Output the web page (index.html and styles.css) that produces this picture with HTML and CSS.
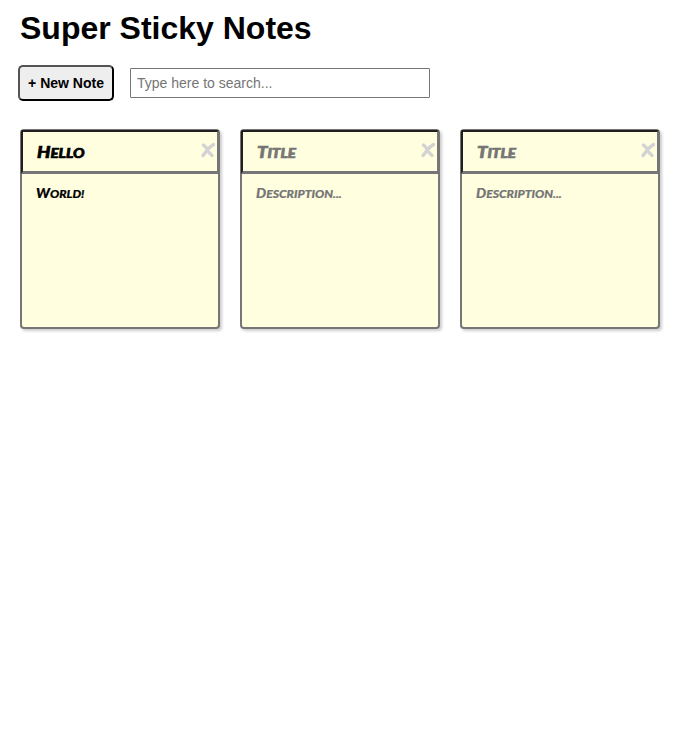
FILE: index.html
```html
<!DOCTYPE html>
<html lang="en">
<head>
<meta charset="utf-8">
<title>Super Sticky Notes</title>
<link rel="stylesheet" href="styles.css">
</head>
<body>
<header>
  <h1 class="app-title">Super Sticky Notes</h1>
  <div class="controls">
    <button class="add-new">+ New Note</button>
    <input class="search" type="text" placeholder="Type here to search...">
  </div>
</header>
<ul class="notes-list">
  <li class="note">
    <div class="note-title"><span class="hand">Hello</span></div>
    <div class="note-body"><span class="hand">World!</span></div>
    <svg class="close" viewBox="0 0 16 16"><path d="M3.500 3Q6.500 5.500 8 8.500T12 13.500M13.500 2.500Q10 4.500 7 8.500T3 13.500"/></svg>
  </li>
  <li class="note empty">
    <div class="note-title"><span class="hand">Title</span></div>
    <div class="note-body"><span class="hand">Description...</span></div>
    <svg class="close" viewBox="0 0 16 16"><path d="M3.500 3Q6.500 5.500 8 8.500T12 13.500M13.500 2.500Q10 4.500 7 8.500T3 13.500"/></svg>
  </li>
  <li class="note empty">
    <div class="note-title"><span class="hand">Title</span></div>
    <div class="note-body"><span class="hand">Description...</span></div>
    <svg class="close" viewBox="0 0 16 16"><path d="M3.500 3Q6.500 5.500 8 8.500T12 13.500M13.500 2.500Q10 4.500 7 8.500T3 13.500"/></svg>
  </li>
</ul>
</body>
</html>
```
FILE: styles.css
```css
* { box-sizing: border-box; }
body { margin: 0; background: #fff; font-family: "Liberation Sans", Arial, sans-serif; color: #000; }
header { padding: 10px 18px 0; }
.app-title { margin: 0 0 0 2px; font-size: 32px; line-height: 37px; }
.controls { display: flex; align-items: center; gap: 16px; margin-top: 18px; }
.add-new { width: 96px; height: 36px; padding: 0; border: 2px outset #000; border-radius: 5px; background: #eee; color: #000; font: bold 14px "Liberation Sans", Arial, sans-serif; white-space: nowrap; }
.search { width: 300px; height: 30px; padding: 1px 6px; border: 1px solid #767676; border-radius: 1px; font: 14px "Liberation Sans", Arial, sans-serif; }
.search::placeholder { color: #757575; }
.notes-list { display: flex; gap: 20px; margin: 28px 0 0; padding: 0 20px 8px; list-style: none; }
.note { position: relative; flex: none; width: 200px; height: 200px; border: 2px solid #767676; border-top-width: 1px; border-radius: 4px; background: #ffffe0; box-shadow: 2px 2px 3px rgba(0,0,0,.2); }
.note-title { height: 44px; margin: 0 -1px; padding: 10px 0 0 14px; border: 2px solid; border-color: #1f1f1f #767676 #767676 #1f1f1f; border-bottom-width: 3px; border-radius: 2px 2px 0 0; }
.note-body { padding: 10px 0 0 14px; }
.hand { display: block; width: max-content; font-family: Lato, "Open Sans", sans-serif; text-transform: uppercase; font-weight: 900; font-style: italic; transform-origin: left center; }
.note-title .hand { font-size: 13.5px; line-height: 21px; -webkit-text-stroke: .7px currentColor; transform: scaleX(1.13); }
.note-title .hand::first-letter { font-size: 16.5px; }
.note-body .hand { font-size: 11.5px; line-height: 18px; -webkit-text-stroke: .2px currentColor; transform: scaleX(1.06); }
.note-body .hand::first-letter { font-size: 13.5px; }
.empty .hand { color: #757575; }
.close { position: absolute; top: 12px; right: 2px; width: 16px; height: 16px; fill: none; stroke: #d3d3d3; stroke-width: 3.5; stroke-linecap: round; }
```
